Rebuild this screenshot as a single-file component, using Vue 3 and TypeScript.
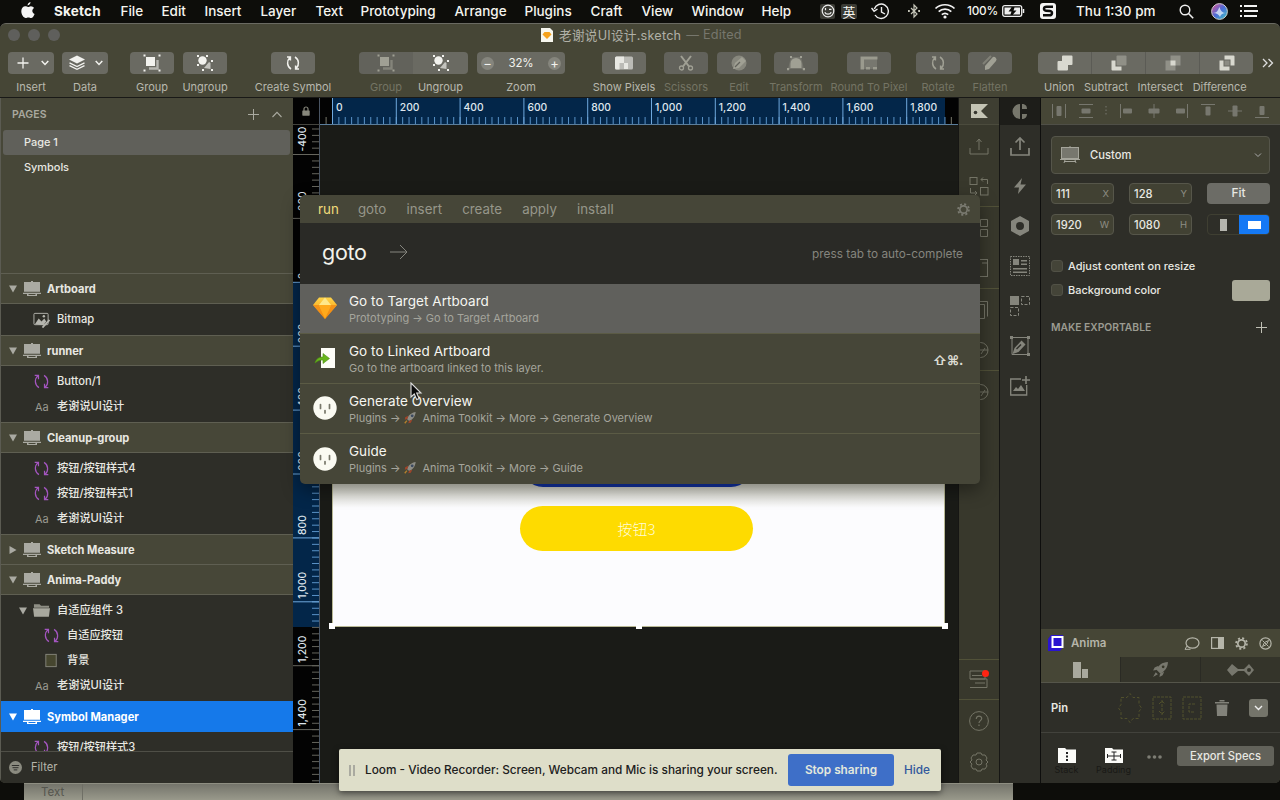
<script setup lang="ts">
interface MenuItem { text: string; width: number }
interface Tool { label: string; icon: string; width: number; gap: number; dim?: boolean; arrow?: boolean; side?: 'l' | 'r' }
interface Layer { name: string; icon: string; indent?: number; caret?: boolean }
interface Group { name: string; open: boolean; selected?: boolean; layers: Layer[] }

const menus: MenuItem[] = [
  { text: 'File', width: 41 }, { text: 'Edit', width: 43 }, { text: 'Insert', width: 56 },
  { text: 'Layer', width: 55 }, { text: 'Text', width: 45 }, { text: 'Prototyping', width: 94 },
  { text: 'Arrange', width: 70 }, { text: 'Plugins', width: 66 }, { text: 'Craft', width: 51 },
  { text: 'View', width: 50 }, { text: 'Window', width: 70 }, { text: 'Help', width: 59 },
]

const tools: Tool[] = [
  { label: 'Insert', icon: 'plus', width: 46, gap: 0, arrow: true },
  { label: 'Data', icon: 'stack', width: 46, gap: 8, arrow: true },
  { label: 'Group', icon: 'group', width: 44, gap: 22 },
  { label: 'Ungroup', icon: 'ungroup', width: 44, gap: 9 },
  { label: 'Create Symbol', icon: 'sync', width: 44, gap: 44 },
  { label: 'Group', icon: 'group', width: 54, gap: 44, dim: true, side: 'l' },
  { label: 'Ungroup', icon: 'ungroup', width: 55, gap: 0, side: 'r' },
  { label: 'Zoom', icon: '', width: 88, gap: 9 },
  { label: 'Show Pixels', icon: 'pixels', width: 44, gap: 37 },
  { label: 'Scissors', icon: 'scissors', width: 44, gap: 18, dim: true },
  { label: 'Edit', icon: 'edit', width: 44, gap: 9, dim: true },
  { label: 'Transform', icon: 'transform', width: 44, gap: 13, dim: true },
  { label: 'Round To Pixel', icon: 'round', width: 44, gap: 29, dim: true },
  { label: 'Rotate', icon: 'sync', width: 44, gap: 25, dim: true },
  { label: 'Flatten', icon: 'flatten', width: 44, gap: 8, dim: true },
]
const booleans = ['Union', 'Subtract', 'Intersect', 'Difference']

const groups: Group[] = [
  { name: 'Artboard', open: true, layers: [{ name: 'Bitmap', icon: 'bitmap' }] },
  { name: 'runner', open: true, layers: [{ name: 'Button/1', icon: 'symbol' }, { name: '老谢说UI设计', icon: 'text' }] },
  { name: 'Cleanup-group', open: true, layers: [
    { name: '按钮/按钮样式4', icon: 'symbol' }, { name: '按钮/按钮样式1', icon: 'symbol' }, { name: '老谢说UI设计', icon: 'text' }] },
  { name: 'Sketch Measure', open: false, layers: [] },
  { name: 'Anima-Paddy', open: true, layers: [
    { name: '自适应组件 3', icon: 'folder', caret: true }, { name: '自适应按钮', icon: 'symbol', indent: 1 },
    { name: '背景', icon: 'rect', indent: 1 }, { name: '老谢说UI设计', icon: 'text' }] },
  { name: 'Symbol Manager', open: true, selected: true, layers: [{ name: '按钮/按钮样式3', icon: 'symbol' }] },
]

const scale = 63.8
const fmt = (n: number) => n.toLocaleString('en-US')
const hMajor = Array.from({ length: 10 }, (_, i) => ({ x: 12.5 + i * scale, label: fmt(i * 200) }))
const hMinor = Array.from({ length: 99 }, (_, i) => 6.1 + i * 6.38).filter(x => x < 638)
const vMajor = Array.from({ length: 10 }, (_, i) => ({ y: 29.5 + i * 63.9, label: fmt(i * 200 - 400) }))
const vMinor = Array.from({ length: 103 }, (_, i) => 4 + i * 6.39).filter(y => y < 657)

const commands = ['goto', 'insert', 'create', 'apply', 'install']
const results = [
  { title: 'Go to Target Artboard', path: ['Prototyping', 'Go to Target Artboard'], icon: 'gem' },
  { title: 'Go to Linked Artboard', path: ['Go to the artboard linked to this layer.'], icon: 'link', keys: '⇧⌘.' },
  { title: 'Generate Overview', path: ['Plugins', '@Anima Toolkit', 'More', 'Generate Overview'], icon: 'face' },
  { title: 'Guide', path: ['Plugins', '@Anima Toolkit', 'More', 'Guide'], icon: 'face' },
]
const craft = ['upload-thin', 'swap', 'swap', 'page', 'pages', 'circle', 'circle']
const runner = ['upload', 'bolt', 'hex', 'list', 'tiles', 'pencil', 'image']
const aligns = ['dist-h', 'dist-v', 'dots', 'al', 'ac', 'ar', 'at', 'am', 'ab']
</script>

<template>
  <div class="screen">
    <svg class="sprite" width="0" height="0">
      <defs>
        <linearGradient id="gemfill" x1="0" y1="0" x2="0" y2="1"><stop offset="0" stop-color="#ffd54a" /><stop offset="1" stop-color="#f58a00" /></linearGradient>
        <linearGradient id="siri" x1="0" y1="0" x2="1" y2="1"><stop offset="0" stop-color="#e8508c" /><stop offset=".5" stop-color="#4a6bd8" /><stop offset="1" stop-color="#3fc9c0" /></linearGradient>
      </defs>
      <symbol id="plus" viewBox="0 0 18 18"><path d="M9 3.500v11M3.500 9h11" stroke="currentColor" stroke-width="1.300" fill="none" /></symbol>
      <symbol id="stack" viewBox="0 0 18 18"><path d="M9 1.500l8 4-8 4-8-4z" fill="currentColor" /><path d="M1.500 8.800L9 12.500l7.500-3.700M1.500 11.600L9 15.300l7.500-3.700" stroke="currentColor" stroke-width="1.300" fill="none" /></symbol>
      <symbol id="group" viewBox="0 0 18 18"><path d="M6 14.500h8.500V6" stroke="currentColor" stroke-width="2.400" opacity=".55" fill="none" /><rect x="3" y="3" width="9" height="9" fill="currentColor" /><path d="M.5.5h2v2h-2zM15.500.5h2v2h-2zM.5 15.500h2v2h-2zM15.500 15.500h2v2h-2z" fill="currentColor" /></symbol>
      <symbol id="ungroup" viewBox="0 0 18 18"><circle cx="6.500" cy="6.500" r="4.200" fill="currentColor" /><path d="M1 1h2v2H1zM10 1h2v2h-2zM1 10h2v2H1zM15 6h2v2h-2zM6 15h2v2H6zM15 15h2v2h-2z" fill="currentColor" /><path d="M8 14l5-6 1.500 1v6z" fill="currentColor" opacity=".65" /></symbol>
      <symbol id="sync" viewBox="0 0 18 18"><path d="M7 15C3 12.500 2.400 7 5.800 3.400M3 3h3.400v3.400M11 3c4 2.500 4.600 8 1.200 11.600M15 15h-3.400v-3.400" stroke="currentColor" stroke-width="1.500" fill="none" /></symbol>
      <symbol id="pixels" viewBox="0 0 18 18"><rect x="0" y="2.500" width="18" height="13" rx="1.500" fill="currentColor" opacity=".6" /><path d="M0 4a1.500 1.500 0 0 1 1.500-1.500H9V9H4.500v6.500h-3A1.500 1.500 0 0 1 0 14zM9 9h4v6H9z" fill="currentColor" opacity=".8" /></symbol>
      <symbol id="scissors" viewBox="0 0 18 18"><path d="M4 2l8 10.500M14 2L6 12.500" stroke="currentColor" stroke-width="2" /><circle cx="4.500" cy="14" r="2" fill="none" stroke="currentColor" stroke-width="1.300" /><circle cx="13.500" cy="14" r="2" fill="none" stroke="currentColor" stroke-width="1.300" /></symbol>
      <symbol id="edit" viewBox="0 0 18 18"><circle cx="9" cy="9" r="7.500" fill="currentColor" opacity=".6" /><path d="M3 15l2-6 7-6 4 4-7 7z" fill="currentColor" /><path d="M5 13l5-5" stroke="#62625b" stroke-width="1.200" /></symbol>
      <symbol id="transform" viewBox="0 0 18 18"><path d="M4 3h10l3 12H1z" fill="currentColor" opacity=".3" /><path d="M3.500 14V9.500a5.500 5.500 0 0 1 11 0V14z" fill="currentColor" /><path d="M0 14h2.200v2.200H0zM15.800 14H18v2.200h-2.200zM3 2h2v2H3zM13 2h2v2h-2z" fill="currentColor" /></symbol>
      <symbol id="round" viewBox="0 0 18 18"><rect x="1" y="3" width="16" height="12" fill="currentColor" opacity=".35" /><path d="M.5 2.500h17v3H4v10H.5zM13 13h4v2.500h-4zM6 13h4v2.500H6z" fill="currentColor" opacity=".85" /></symbol>
      <symbol id="flatten" viewBox="0 0 18 18"><path d="M4 12l7-8a2.500 2.500 0 0 1 4 3l-7 8-4 1z" fill="currentColor" /><path d="M2 10l8-8" stroke="currentColor" stroke-width="2" opacity=".5" /></symbol>
      <symbol id="Union" viewBox="0 0 16 16"><path d="M6 .5h8.500a1 1 0 0 1 1 1V9a1 1 0 0 1-1 1H11v4.500a1 1 0 0 1-1 1H1.500a1 1 0 0 1-1-1V7a1 1 0 0 1 1-1H5V1.500a1 1 0 0 1 1-1z" fill="currentColor" /></symbol>
      <symbol id="Subtract" viewBox="0 0 16 16"><rect x="5.500" y=".5" width="10" height="10" rx="1" fill="currentColor" opacity=".35" /><path d="M.5 5.500h4v6h6v4H1.500a1 1 0 0 1-1-1z" fill="currentColor" /></symbol>
      <symbol id="Intersect" viewBox="0 0 16 16"><path d="M5.500.5h10v10h-5v5H.5v-10h5z" fill="currentColor" opacity=".35" /><rect x="5.500" y="5.500" width="5" height="5" fill="currentColor" /></symbol>
      <symbol id="Difference" viewBox="0 0 16 16"><path d="M5.500.5h9a1 1 0 0 1 1 1v9h-4v-6h-6zM.5 5.500h4v6h6v4H1.500a1 1 0 0 1-1-1z" fill="currentColor" /><rect x="5.500" y="5.500" width="5" height="5" fill="currentColor" opacity=".3" /></symbol>
      <symbol id="board" viewBox="0 0 18 16"><path d="M1 1h16v9.800H1zM8 0h2v2H8zM0 11.800h18V13H0zM4 13h1.500v2H4zM12.500 13H14v2h-1.500zM4 14h10v1H4z" fill="currentColor" /></symbol>
      <symbol id="bitmap" viewBox="0 0 18 18"><rect x="1" y="2.500" width="15" height="12" rx="1" fill="none" stroke="#b5b5ae" /><path d="M2 14l4-6 3 3 3-3 2 3-3 4z" fill="#b5b5ae" /><circle cx="11.500" cy="5.500" r="1.300" fill="#b5b5ae" /><path d="M10 17.500l7.500-8" stroke="#b5b5ae" stroke-width="2" /></symbol>
      <symbol id="symbol" viewBox="0 0 18 18"><path d="M6.300 15.500C1.600 12.700 1.400 6.300 5 3M1.800 2.500h4v4.200M11.700 2.500c4.700 2.800 4.900 9.200 1.300 12.500M16.200 15.500h-4v-4.200" stroke="#a355bf" stroke-width="1.300" fill="none" /></symbol>
      <symbol id="folder" viewBox="0 0 18 16"><path d="M1 1.500h6L8.500 3H17v2H1z" fill="#8e8e84" /><path d="M0 5.500h18l-1.200 9H1.200z" fill="#a8a89e" /></symbol>
      <symbol id="rect" viewBox="0 0 18 18"><rect x="3" y="2.500" width="11" height="13" fill="#46462f" stroke="#85857b" /></symbol>
      <symbol id="face" viewBox="0 0 24 24"><circle cx="12" cy="12" r="11.700" fill="#fafaf2" /><path d="M7.500 8.500v4M16.500 8.500v4M12 14.500v2.500" stroke="#77776a" stroke-width="1.700" stroke-linecap="round" /></symbol>
      <symbol id="gem" viewBox="0 0 24 24"><path d="M6 1.500h12l6 7.500-12 14L0 9z" fill="url(#gemfill)" /><path d="M6 9h12L12 1.500z" fill="#ffe88a" /><path d="M0 9h6l6 14zM24 9h-6l-6 14z" fill="#f28a13" opacity=".8" /><path d="M6 9h12l-6 14z" fill="#ffaa1c" /></symbol>
      <symbol id="link" viewBox="0 0 24 24"><rect x="8" y="2" width="14" height="20" fill="#fdfdf8" /><path d="M2 17c1-4 4-6 8-6V7.500l6.500 5-6.500 5V14c-3 0-5 .5-8 3z" fill="#68b51d" stroke="#4b8e12" stroke-width=".6" /></symbol>
      <symbol id="rocket" viewBox="0 0 16 16"><path d="M14.500 1C10 1.500 6 5 4.500 9l2.500 2.500C11 10 14 6 14.500 1z" fill="#8d8d86" /><path d="M6 5.500L2.500 7 2 10l3-1zM10.500 10L9 13.500l-3 .5 1-3z" fill="#a0442a" /><circle cx="10.500" cy="5.500" r="1.600" fill="#3b4a60" /><path d="M4.500 11L2 14" stroke="#b5802b" stroke-width="1.500" /></symbol>
      <symbol id="upload-thin" viewBox="0 0 20 20"><path d="M1 12v6h18v-6M10 14V3M7.500 6L10 3l2.500 3" stroke="currentColor" fill="none" /></symbol>
      <symbol id="swap" viewBox="0 0 20 20"><rect x="1" y="1.500" width="7" height="7" stroke="currentColor" fill="none" /><rect x="11.500" y="11.500" width="7.500" height="7.500" stroke="currentColor" fill="none" /><path d="M18.500 8V3.500H12M14 1.500l-2 2 2 2M1.500 12v5H8M6 15l2 2-2 2" stroke="currentColor" fill="none" /></symbol>
      <symbol id="docks" viewBox="0 0 20 20"><path d="M1.500 1.500h7v7h-7zM11.500 1.500h7v7h-7zM1.500 11.500h7v7h-7zM11.500 11.500h7v7h-7z" stroke="currentColor" fill="none" /></symbol>
      <symbol id="page" viewBox="0 0 20 20"><rect x="1.500" y="1.500" width="17" height="17" stroke="currentColor" fill="none" /><path d="M13 5h5" stroke="currentColor" /></symbol>
      <symbol id="pages" viewBox="0 0 20 20"><path d="M5 1.500h13.500v15M2 4.500h13.500v14H2z" stroke="currentColor" fill="none" /></symbol>
      <symbol id="circle" viewBox="0 0 20 20"><circle cx="11.500" cy="10" r="7.500" stroke="currentColor" fill="none" /><path d="M10 10h9M12 14l4-6" stroke="currentColor" /></symbol>
      <symbol id="upload" viewBox="0 0 20 20"><path d="M1 12v7h18v-7M10 14V2M5.500 6.500L10 2l4.500 4.500" stroke="currentColor" stroke-width="1.700" fill="none" /></symbol>
      <symbol id="bolt" viewBox="0 0 20 20"><path d="M12 2L4 11.500h5L8 18l8-9.500h-5.500z" fill="currentColor" /></symbol>
      <symbol id="hex" viewBox="0 0 20 20"><path fill-rule="evenodd" d="M10 0l9 5v10l-9 5-9-5V5zM10 6a4 4 0 1 0 0 8 4 4 0 0 0 0-8z" fill="currentColor" /></symbol>
      <symbol id="list" viewBox="0 0 20 20"><rect x=".5" y=".5" width="19" height="19" fill="none" stroke="currentColor" stroke-dasharray="1.500 1" /><path d="M3 3h6v6H3zM11 4h6v1.500h-6zM11 7.500h6V9h-6zM3 12h14v1.600H3zM3 15.400h14V17H3z" fill="currentColor" /></symbol>
      <symbol id="tiles" viewBox="0 0 20 20"><rect width="9" height="9" fill="currentColor" /><path d="M11.500.5h8v8h-8zM.5 11.500h8v8h-8z" fill="none" stroke="currentColor" stroke-dasharray="3 1.500" /></symbol>
      <symbol id="pencil" viewBox="0 0 20 20"><path d="M2 1.500h16v17H2z" fill="none" stroke="currentColor" /><path d="M0 0h3v3H0zM17 0h3v3h-3zM17 17h3v3h-3z" fill="currentColor" /><path d="M2.500 18l2-6 7-7.500 4 4-7 7.500z" fill="currentColor" /><path d="M6.500 13l4.500-4.500" stroke="#2e2e28" stroke-width="1.500" /></symbol>
      <symbol id="image" viewBox="0 0 20 20"><path d="M11 3H.7v16h16V9" fill="none" stroke="currentColor" stroke-width="1.300" /><path d="M3 15l3-4 2 2 3-4 4 6zM15.200 0h1.600v3.200H20v1.600h-3.200V8h-1.600V4.800H12V3.200h3.200z" fill="currentColor" /></symbol>
      <symbol id="dist-h" viewBox="0 0 14 14"><path d="M.5 0v14M13.500 0v14" stroke="currentColor" /><rect x="4.500" y="2" width="5" height="10" rx="1" fill="currentColor" /></symbol>
      <symbol id="dist-v" viewBox="0 0 14 14"><path d="M0 .5h14M0 13.500h14" stroke="currentColor" /><rect x="2.500" y="4.500" width="9" height="5" rx="1" fill="currentColor" /></symbol>
      <symbol id="dots" viewBox="0 0 14 14"><path d="M7 2v10" stroke="currentColor" stroke-dasharray="1.500 2" /></symbol>
      <symbol id="al" viewBox="0 0 14 14"><path d="M.5 0v14" stroke="currentColor" /><rect x="3" y="4.500" width="9" height="5" rx="1" fill="currentColor" /></symbol>
      <symbol id="ac" viewBox="0 0 14 14"><path d="M7 0v14" stroke="currentColor" /><rect x="1.500" y="4.500" width="11" height="5" rx="1" fill="currentColor" /></symbol>
      <symbol id="ar" viewBox="0 0 14 14"><path d="M13.500 0v14" stroke="currentColor" /><rect x="2" y="4.500" width="9" height="5" rx="1" fill="currentColor" /></symbol>
      <symbol id="at" viewBox="0 0 14 14"><path d="M0 .5h14" stroke="currentColor" /><rect x="4.500" y="2.500" width="5" height="9" rx="1" fill="currentColor" /></symbol>
      <symbol id="am" viewBox="0 0 14 14"><path d="M0 7h14" stroke="currentColor" /><rect x="4.500" y="1.500" width="5" height="11" rx="1" fill="currentColor" /></symbol>
      <symbol id="ab" viewBox="0 0 14 14"><path d="M0 13.500h14" stroke="currentColor" /><rect x="4.500" y="2" width="5" height="9" rx="1" fill="currentColor" /></symbol>
      <symbol id="cog" viewBox="0 0 20 20"><circle cx="10" cy="10" r="5.700" fill="none" stroke="currentColor" stroke-width="2.600" /><circle cx="10" cy="10" r="8.300" fill="none" stroke="currentColor" stroke-width="2.800" stroke-dasharray="3.200 3.320" /></symbol>
    </svg>

    <header class="menubar">
      <svg class="apple" width="14" height="17" viewBox="0 0 14 17"><path d="M9.500 0c.1 1.700-1.200 3.300-2.900 3.400C6.500 1.800 7.900.2 9.500 0zM9.800 4.200c1.400 0 2.600.8 3.200 1.700-2.500 1.500-2 5 .6 6-.6 1.700-2 4.100-3.500 4.100-1 0-1.500-.6-2.700-.6-1.200 0-1.700.6-2.700.6C2.600 16 .2 12.300.3 9 .4 6 2.300 4.300 4.200 4.300c1.200 0 2.200.7 2.900.7.700 0 1.600-.8 2.700-.8z" fill="#f5f5f5" /></svg>
      <strong class="app">Sketch</strong>
      <span v-for="m in menus" :key="m.text" class="menu" :style="{ width: m.width + 'px' }">{{ m.text }}</span>
      <div class="status">
        <span class="tile"><svg width="14" height="14" viewBox="0 0 14 14"><circle cx="7" cy="7" r="5.800" fill="none" stroke="#eee" stroke-width="1.200" /><path d="M4.500 4v2.200M8 5.300h2.500M3.800 8.200c1 2.700 5.400 2.700 6.400 0" stroke="#eee" stroke-width="1.200" fill="none" /></svg></span>
        <span class="tile han">英</span>
        <svg class="clock" width="19" height="17" viewBox="0 0 19 17"><path d="M3.300 6A7.200 7.200 0 1 1 4 12M.5 5l2.600 3.300L6.500 6M10.500 4v5l3.500 2" stroke="#eee" stroke-width="1.400" fill="none" /></svg>
        <svg class="bt" width="12" height="16" viewBox="0 0 12 16"><path d="M3 5l6 6-3 3V2l3 3-6 6" stroke="#c5c5b8" stroke-width="1.200" fill="none" /><path d="M0 8h1.800M5.200 8h1.600M10.200 8H12" stroke="#c5c5b8" stroke-width="1.800" /></svg>
        <svg class="wifi" width="22" height="16" viewBox="0 0 22 16"><path d="M1.500 5.500c5-5 14-5 19 0M4.700 8.700c3.500-3.400 9.100-3.400 12.600 0M7.800 11.700c2-1.700 4.400-1.700 6.400 0" stroke="#f2f2f2" stroke-width="1.700" fill="none" /><circle cx="11" cy="14" r="1.600" fill="#f2f2f2" /></svg>
        <span class="pct">100%</span>
        <svg class="batt" width="23" height="12" viewBox="0 0 23 12"><rect x=".7" y=".7" width="19" height="10.600" rx="2" fill="none" stroke="#eee" stroke-width="1.300" /><path d="M2.500 2.500h7l-3 4h3l-1 3h-6zM12.500 2.500H18v7h-7l3.500-4h-3z" fill="#eee" /><path d="M21.500 4v4" stroke="#eee" stroke-width="1.500" /></svg>
        <svg class="sogou" width="16" height="16" viewBox="0 0 16 16"><rect width="16" height="16" rx="3" fill="#f4f4f4" /><path d="M13 3.800H6.500C3.200 3.800 3.200 7.500 6 7.700l4 .3c3 .3 2.500 4.300-.5 4.300H3" stroke="#0c0c0c" stroke-width="2.400" fill="none" /></svg>
        <span class="time">Thu 1:30 pm</span>
        <svg class="search" width="15" height="15" viewBox="0 0 15 15"><circle cx="6" cy="6" r="4.800" fill="none" stroke="#eee" stroke-width="1.400" /><path d="M9.500 9.500l4.700 4.700" stroke="#eee" stroke-width="1.600" /></svg>
        <svg class="siri" width="17" height="17" viewBox="0 0 17 17"><circle cx="8.500" cy="8.500" r="7.900" fill="url(#siri)" stroke="#ccc" /><path d="M2 10c4 0 5-3 6.500-6 1 4 3 6 6.500 6-3 0-5 1-6 4-1-2-3-4-7-4z" fill="#f3fcff" opacity=".7" /></svg>
        <svg class="notif" width="18" height="12" viewBox="0 0 18 12"><path d="M0 1h2M0 6h2M0 11h2M4 1h13M4 6h14M4 11h13" stroke="#f2f2f2" stroke-width="1.900" /></svg>
      </div>
    </header>

    <main class="window">
      <div class="titlebar">
        <i class="light" /><i class="light" /><i class="light" />
        <div class="title">
          <svg width="12" height="14" viewBox="0 0 12 14"><path d="M0 0h9l3 3v11H0z" fill="#f7f7ef" /><path d="M3.500 4h5l2 2.500L6 11 1.500 6.500z" fill="#f5a21c" /></svg>
          <span>老谢说UI设计.sketch</span><em>— Edited</em>
        </div>
      </div>

      <div class="toolbar">
        <div v-for="(t, i) in tools" :key="i" class="tool" :class="[t.side, { dim: t.dim }]" :style="{ width: t.width + 'px', marginLeft: t.gap + 'px' }">
          <div class="btn">
            <template v-if="t.icon">
              <svg width="18" height="18"><use :href="'#' + t.icon" /></svg>
              <svg v-if="t.arrow" class="arr" width="8" height="6" viewBox="0 0 8 6"><path d="M.7 1L4 4.500 7.300 1" stroke="currentColor" stroke-width="1.500" fill="none" /></svg>
            </template>
            <template v-else>
              <i class="zb">−</i><span class="zv">32%</span><i class="zb on">+</i>
            </template>
          </div>
          <span class="lbl">{{ t.label }}</span>
        </div>
        <div class="bools">
          <div class="boolrow"><div v-for="b in booleans" :key="b" class="seg"><svg width="16" height="16"><use :href="'#' + b" /></svg></div></div>
          <div class="boollabels"><span v-for="b in booleans" :key="b">{{ b }}</span></div>
        </div>
        <svg class="more" width="12" height="10" viewBox="0 0 12 10"><path d="M1 1l4 4-4 4M6.500 1l4 4-4 4" stroke="#ddd" stroke-width="1.300" fill="none" /></svg>
      </div>

      <div class="body">
        <aside class="side">
          <div class="pages">
            <div class="phead"><span>PAGES</span>
              <svg width="13" height="13" viewBox="0 0 13 13"><path d="M6.500 1v11M1 6.500h11" stroke="#aaaaa0" /></svg>
              <svg width="10" height="7" viewBox="0 0 10 7"><path d="M.5 6L5 1.300 9.500 6" stroke="#aaaaa0" fill="none" stroke-width="1.100" /></svg>
            </div>
            <div class="prow active">Page 1</div>
            <div class="prow">Symbols</div>
          </div>
          <div class="layers">
            <section v-for="g in groups" :key="g.name">
              <div class="ghead" :class="{ closed: !g.open, selected: g.selected }">
                <svg class="tri" width="8" height="8" viewBox="0 0 8 8"><path :d="g.open ? 'M0 .5h8L4 7.500z' : 'M.5 0v8L7.500 4z'" fill="currentColor" /></svg>
                <svg class="gicon" width="18" height="16"><use href="#board" /></svg>
                <span>{{ g.name }}</span>
              </div>
              <div v-if="g.open" class="kids">
                <div v-for="(l, i) in g.layers" :key="i" class="lrow" :class="{ deep: l.indent }">
                  <svg v-if="l.caret" class="tri sub" width="8" height="8" viewBox="0 0 8 8"><path d="M0 .5h8L4 7.500z" fill="currentColor" /></svg>
                  <span v-if="l.icon === 'text'" class="aa">Aa</span>
                  <svg v-else class="licon" width="17" height="17"><use :href="'#' + l.icon" /></svg>
                  <span class="lname">{{ l.name }}</span>
                </div>
              </div>
            </section>
          </div>
          <div class="filter">
            <svg width="13" height="13" viewBox="0 0 13 13"><circle cx="6.500" cy="6.500" r="6.500" fill="#8b8b80" /><path d="M2.800 4.500h7.400M3.500 6.700h6M4.700 8.900h3.600" stroke="#30302d" /></svg>
            <span>Filter</span>
          </div>
        </aside>

        <div class="work">
          <div class="hrow">
            <div class="lock"><svg width="8" height="10" viewBox="0 0 8 10"><path d="M2 5V3a2 2 0 0 1 4 0v2" fill="none" stroke="#88887c" stroke-width="1.200" /><rect x=".3" y="4.500" width="7.400" height="5.200" rx=".6" fill="#88887c" /></svg></div>
            <svg class="hruler" width="638" height="27">
              <rect x="12" width="613" height="26" fill="#032649" />
              <line v-for="x in hMinor" :key="x" :x1="x" :x2="x" y1="19" y2="26" :stroke="x < 12 || x > 625 ? '#77776a' : '#5a93c8'" />
              <g v-for="m in hMajor" :key="m.label"><line :x1="m.x" :x2="m.x" y1="0" y2="26" stroke="#6fa8dd" /><text :x="m.x + 3.500" y="13">{{ m.label }}</text></g>
              <path d="M0 26.500h638" stroke="#5b7e9c" />
            </svg>
          </div>
          <div class="crow">
            <svg class="vruler" width="27" height="658">
              <rect y="157" width="27" height="345" fill="#032649" />
              <line v-for="y in vMinor" :key="y" :y1="y" :y2="y" x1="19" x2="26" :stroke="y < 157 || y > 502 ? '#66665e' : '#5a93c8'" />
              <g v-for="m in vMajor" :key="m.label"><line :y1="m.y" :y2="m.y" x1="0" x2="26" :stroke="m.y < 156 || m.y > 502 ? '#66665e' : '#6fa8dd'" /><text :transform="`translate(13 ${m.y - 3}) rotate(-90)`">{{ m.label }}</text></g>
              <path d="M26.500 0v658" stroke="#4a5563" />
            </svg>
            <div class="canvas">
              <div class="artboard">
                <div class="bluebtn" />
                <div class="yellowbtn">按钮3</div>
                <i class="h a" /><i class="h b" /><i class="h c" />
              </div>
            </div>
          </div>
        </div>

        <div class="strip craft">
          <div class="shead"><svg width="17" height="16" viewBox="0 0 17 16"><path d="M0 1h17l-7 7 7 7H0z" fill="#c4c4b4" /><circle cx="4.500" cy="9.500" r="1.800" fill="#37372f" /></svg></div>
          <div v-for="(c, i) in craft" :key="i" class="cell" :class="{ line: i === 1 || i === 3 || i === 5 }"><svg width="20" height="20"><use :href="i === 2 ? '#docks' : '#' + c" /></svg></div>
          <div class="spacer" />
          <div class="cell top line"><svg width="20" height="20" viewBox="0 0 20 20"><path d="M1 1h15v8H1zM1 9h17v8.500H1M3 5.500h10M6 13h10" stroke="currentColor" fill="none" /><circle cx="16.500" cy="3.500" r="3.500" fill="#ff2413" /></svg></div>
          <div class="cell"><svg width="20" height="20" viewBox="0 0 20 20"><circle cx="10" cy="10" r="9.400" stroke="currentColor" fill="none" /><path d="M7.300 8c0-4 5.500-3.500 5.400-.5 0 2-2.700 2.300-2.700 4.500M10 13.500v1.500" stroke="currentColor" fill="none" stroke-width="1.200" /></svg></div>
          <div class="cell"><svg width="20" height="20" viewBox="0 0 20 20"><path d="M8 1h4l1 2 3 0 2 3-1 2 2 2-2 2 1 2-2 3-3 0-1 2H8l-1-2-3 0-2-3 1-2-2-2 2-2-1-2 2-3 3 0z" stroke="currentColor" fill="none" stroke-linejoin="round" /><circle cx="10" cy="10" r="3" stroke="currentColor" fill="none" /></svg></div>
        </div>

        <div class="strip runner">
          <div class="shead"><svg width="17" height="17" viewBox="0 0 17 17"><path d="M8 1v15A7.500 7.500 0 0 1 8 1zM10 1c4 0 5 2.500 5 5h-5zM10 11h5c0 3-2 5-5 5z" fill="#77776c" /></svg></div>
          <div v-for="r in runner" :key="r" class="cell"><svg width="20" height="20"><use :href="'#' + r" /></svg></div>
        </div>

        <aside class="inspector">
          <div class="aligns"><svg v-for="a in aligns" :key="a" :class="{ narrow: a === 'dots' }" width="14" height="14"><use :href="'#' + a" /></svg></div>
          <div class="props">
            <div class="select">
              <svg width="20" height="18" viewBox="0 0 20 18"><rect x="1.500" y="1.500" width="17" height="11" fill="#77776e" stroke="#a5a59b" /><path d="M0 13.500h20M5 14l-1 3M15 14l1 3M4 15.500h12M10 0v1" stroke="#a5a59b" /></svg>
              <span>Custom</span>
              <svg width="8" height="6" viewBox="0 0 8 6"><path d="M1 1.500l3 3 3-3" stroke="#aaa" fill="none" /></svg>
            </div>
            <div class="frow"><div class="inp"><b>111</b><i>X</i></div><div class="inp"><b>128</b><i>Y</i></div><div class="fit">Fit</div></div>
            <div class="frow two"><div class="inp"><b>1920</b><i>W</i></div><div class="inp"><b>1080</b><i>H</i></div><div class="orient"><div><i class="port" /></div><div class="on"><i class="land" /></div></div></div>
            <div class="check"><i /><span>Adjust content on resize</span></div>
            <div class="check second"><i /><span>Background color</span><b class="swatch" /></div>
            <div class="export"><span>MAKE EXPORTABLE</span><svg width="11" height="11" viewBox="0 0 11 11"><path d="M5.500 0v11M0 5.500h11" stroke="#c0c0b5" /></svg></div>
          </div>
          <div class="anima">
            <div class="ahead">
              <svg class="alogo" width="16" height="16" viewBox="0 0 16 16"><path d="M0 4l3-4h12v12l-3 4H0z" fill="#2a14d0" /><rect x="4.500" y="2" width="10" height="10" fill="#2a14d0" stroke="#fff" stroke-width="2" /></svg>
              <strong>Anima</strong>
              <svg width="16" height="13" viewBox="0 0 16 13"><ellipse cx="8.500" cy="6" rx="6.500" ry="5.200" fill="none" stroke="currentColor" stroke-width="1.200" /><path d="M3 9l-2 3.300h5.500" stroke="currentColor" fill="none" /></svg>
              <svg width="13" height="12" viewBox="0 0 13 12"><rect x=".6" y=".6" width="11.800" height="10.800" fill="none" stroke="currentColor" stroke-width="1.200" /><path d="M7 0h6v12H7z" fill="currentColor" /></svg>
              <svg width="13" height="13"><use href="#cog" /></svg>
              <svg width="13" height="13" viewBox="0 0 13 13"><circle cx="6.500" cy="6.500" r="5.600" fill="none" stroke="currentColor" stroke-width="1.200" /><path d="M3.500 3.500l6 6M9.500 3.500l-4 2-2 4 4-2z" stroke="currentColor" fill="none" /></svg>
            </div>
            <div class="atabs">
              <div class="on"><svg width="17" height="16" viewBox="0 0 17 16"><path d="M1 0h8v16H1zM10 7h6v9h-6z" fill="#a9a99e" /></svg></div>
              <div><svg width="17" height="17" viewBox="0 0 16 16"><path d="M15 1C9.500 1 6 4.500 4 8l4 4c3.500-2 7-5.500 7-11zM6 4.500L2.500 6 1 9l3-.5zM11.500 10L10 13.500 7 15l.5-3zM3.500 10.500L1 15l4.500-2.500z" fill="#77776d" /><circle cx="10.500" cy="5.500" r="1.300" fill="#363628" /></svg></div>
              <div><svg width="27" height="12" viewBox="0 0 27 12"><path fill-rule="evenodd" d="M5 0l6 5h6l5-5 5 6-5 6-5-5h-6l-6 5-5-6zM22 4a2 2 0 1 0 0 4 2 2 0 0 0 0-4z" fill="#77776d" /></svg></div>
            </div>
            <div class="pin">
              <strong>Pin</strong>
              <svg width="24" height="30" viewBox="0 0 24 30"><path d="M3 4.500h6l3-4 3 4h6v7l2.500 3.500-2.500 3.500v7h-6l-3 4-3-4H3v-7L.5 15 3 11.500z" fill="none" stroke="#51502c" stroke-dasharray="3 2" /></svg>
              <svg width="20" height="24" viewBox="0 0 20 24"><path d="M1 1h18v22H1zM10 4v15M7 8l3-3 3 3M7 15l3 3 3-3" fill="none" stroke="#51502c" stroke-dasharray="3 1" /></svg>
              <svg width="20" height="24" viewBox="0 0 20 24"><path d="M1 1h18v22H1zM13 8H7v8h6" fill="none" stroke="#51502c" stroke-dasharray="3 1" /></svg>
              <svg class="bin" width="14" height="16" viewBox="0 0 14 16"><path d="M0 2h14v1.500H0zM4.500 0h5v1.500h-5zM1.500 4.500h11L12 16H2z" fill="#82827a" /></svg>
              <div class="drop"><svg width="9" height="6" viewBox="0 0 9 6"><path d="M1 1l3.500 3.500L8 1" stroke="#eee" stroke-width="1.400" fill="none" /></svg></div>
            </div>
            <div class="afoot">
              <div class="fold"><svg width="18" height="15" viewBox="0 0 18 15"><path d="M0 0h7l1.500 1.500H18V15H0z" fill="#fbfbf8" /><path d="M9 4v9" stroke="#222" stroke-width="2" stroke-dasharray="2 1.500" /></svg><span>Stack</span></div>
              <div class="fold"><svg width="18" height="15" viewBox="0 0 18 15"><path d="M0 0h7l1.500 1.500H18V15H0z" fill="#fbfbf8" /><path d="M2.500 8h13M9 4v8M2.500 6v4M15.500 6v4M6.500 4h5M6.500 12h5" stroke="#222" /></svg><span>Padding</span></div>
              <svg class="dots" width="15" height="4" viewBox="0 0 15 4"><circle cx="2" cy="2" r="1.800" fill="#7d7d74" /><circle cx="7.500" cy="2" r="1.800" fill="#7d7d74" /><circle cx="13" cy="2" r="1.800" fill="#7d7d74" /></svg>
              <div class="specs">Export Specs</div>
            </div>
          </div>
        </aside>
      </div>
    </main>

    <footer class="behind"><span>Text</span></footer>

    <div class="runbar">
      <div class="rtabs"><span class="cur">run</span><span v-for="c in commands" :key="c">{{ c }}</span><svg width="13" height="13"><use href="#cog" /></svg></div>
      <div class="rinput"><span class="q">goto</span>
        <svg width="18" height="16" viewBox="0 0 18 16"><path d="M0 8h17M10 1l7 7-7 7" stroke="#85857e" fill="none" /></svg>
        <span class="hint">press tab to auto-complete</span></div>
      <div v-for="(r, i) in results" :key="i" class="rrow" :class="{ sel: i === 0 }">
        <svg class="ricon" width="24" height="24"><use :href="'#' + r.icon" /></svg>
        <div class="rtext"><div class="rt">{{ r.title }}</div>
          <div class="rs"><template v-for="(p, j) in r.path" :key="j"><span v-if="j" class="ar">→</span><svg v-if="p[0] === '@'" width="14" height="14"><use href="#rocket" /></svg><span>{{ p.replace('@', '') }}</span></template></div></div>
        <span v-if="r.keys" class="keys">{{ r.keys }}</span>
      </div>
    </div>

    <div class="loom">
      <i class="grip" />
      <span class="msg">Loom - Video Recorder: Screen, Webcam and Mic is sharing your screen.</span>
      <div class="stop">Stop sharing</div>
      <span class="hide">Hide</span>
    </div>

    <svg class="cursor" width="13" height="19" viewBox="0 0 13 19"><path d="M1 1v14l3.300-3 2.400 5.600 2.400-1L6.700 11H11z" fill="#0a0a0a" stroke="#ddd" stroke-width="1.100" /></svg>
  </div>
</template>

<style>
body { margin: 0; background: #000; overflow: hidden; }
</style>

<style scoped>
* { box-sizing: border-box; }
i, em { font-style: normal; }
svg { flex: none; display: block; }
.screen { width: 1280px; height: 800px; position: relative; overflow: hidden; background: #0d0d0a; font-family: Inter, "Noto Sans CJK SC", sans-serif; color: #e8e8e2; display: flex; flex-direction: column; font-size: 11px; white-space: nowrap; }
.sprite { position: absolute; }
.menubar { height: 23px; flex: none; display: flex; align-items: center; background: #0d0d0a; font-size: 13.500px; color: #f5f5f0; font-weight: 500; padding-bottom: 1px; }
.apple { margin-left: 21px; margin-top: -1px; }
.app { margin-left: 19px; width: 66px; font-weight: 700; letter-spacing: .2px; }
.menu { letter-spacing: -.02px; padding-left: .5px; }
.status { display: flex; align-items: center; flex: 1; margin-left: 0; }
.tile { width: 15px; height: 15px; background: #3b3b35; border-radius: 2px; display: flex; align-items: center; justify-content: center; margin-right: 6px; }
.han { width: 16px; font-size: 13px; font-family: "Noto Sans CJK SC", sans-serif; font-weight: 400; }
.clock { margin-left: 8px; }
.bt { margin-left: 18px; }
.wifi { margin-left: 14px; }
.pct { margin-left: 11px; font-size: 11.800px; width: 33px; letter-spacing: -.2px; }
.batt { margin-left: 2px; }
.sogou { margin-left: 15px; }
.time { margin-left: 20px; width: 103px; }
.siri { margin-left: 17px; }
.notif { margin-left: 12px; }

.window { height: 760px; flex: none; border-radius: 6px 6px 5px 5px; overflow: hidden; background: #464636; border-top: 1px solid #6a6a62; display: flex; flex-direction: column; }
.titlebar { height: 21px; display: flex; align-items: center; padding-left: 8px; gap: 8px; flex: none; }
.light { width: 12px; height: 12px; border-radius: 50%; background: #5f5f5c; }
.title { margin-left: 473px; display: flex; align-items: center; font-size: 12.700px; color: #b0b0a7; letter-spacing: .2px; }
.title span { margin-left: 6px; }
.title em { margin-left: 5px; color: #77776d; }
.toolbar { height: 53px; flex: none; display: flex; align-items: flex-start; padding: 7px 0 0 8px; border-bottom: 1px solid #191917; }
.tool { display: flex; flex-direction: column; align-items: center; flex: none; }
.btn { width: 100%; height: 22px; border-radius: 4px; background: #6a6a62; display: flex; align-items: center; justify-content: center; color: #f2f2ee; }
.l .btn { border-radius: 4px 0 0 4px; }
.r .btn { border-radius: 0 4px 4px 0; }
.arr { margin-left: 9px; }
.lbl, .boollabels { margin-top: 5px; font-size: 11px; line-height: 16px; color: #b8b8ae; }
.dim .lbl { color: #747464; }
.dim .btn { background: #62625b; color: #a0a094; }
.zb { width: 13px; height: 13px; border-radius: 50%; background: #85857d; line-height: 12px; text-align: center; font-size: 13px; }
.zv { width: 54px; text-align: center; font-size: 11.500px; letter-spacing: -.2px; }
.bools { margin-left: 26px; width: 215px; }
.boolrow { height: 22px; display: flex; border-radius: 4px; background: #6a6a62; color: #d8d8cf; }
.seg { flex: 1; display: flex; align-items: center; justify-content: center; border-right: 1px solid #5b5b55; }
.seg:last-child { border: 0; }
.boollabels { display: flex; gap: 9.500px; margin-left: 6px; }
.more { margin-left: 9px; margin-top: 6px; }

.body { flex: 1; display: flex; min-height: 0; }
.side { width: 293px; flex: none; display: flex; flex-direction: column; border-left: 1px solid #5b5b52; background: #2e2e28; }
.pages { height: 175px; flex: none; background: #474738; padding: 0 3px 0 2px; }
.phead { height: 32px; display: flex; align-items: center; padding: 0 8px 0 9px; font-weight: 600; color: #a9a99f; font-size: 10.500px; letter-spacing: .1px; }
.phead span { flex: 1; }
.phead svg { margin-left: 12px; }
.prow { height: 25px; line-height: 25px; padding-left: 21px; font-weight: 500; font-size: 11px; border-radius: 3px; letter-spacing: -.05px; }
.prow.active { background: #60605a; }
.layers { flex: 1; min-height: 0; overflow: hidden; }
.ghead { height: 31px; background: #474738; border-top: 1px solid #5f5f52; border-bottom: 1px solid #5f5f52; display: flex; align-items: center; font-weight: 700; font-size: 11.100px; padding-left: 8px; color: #e8e8e2; }
.ghead.closed { height: 30px; border-bottom: 0; }
.ghead.selected { background: #1579ea; border-color: #1579ea; color: #fff; }
.tri { color: #aaaaa2; }
.selected .tri, .selected .gicon { color: #fff; }
.gicon { margin: 0 6px 0 6px; color: #aaaaa2; }
.kids { padding: 3px 0 3px; }
.lrow { height: 25px; display: flex; align-items: center; padding-left: 32px; font-weight: 500; font-size: 11.200px; line-height: 16px; }
.lrow .lname { margin-top: -1px; }
.deep { padding-left: 42px; }
.sub { margin-left: -14px; margin-right: 6px; }
.licon { margin-right: 7px; }
.aa { width: 24px; padding-left: 2px; color: #9a9a90; font-weight: 400; font-size: 11px; }
.filter { height: 32px; flex: none; border-top: 1px solid #4f4f47; display: flex; align-items: center; padding: 0 0 1px 8px; color: #b5b5ab; font-size: 11.200px; }
.filter span { margin-left: 9px; }

.work { width: 665px; flex: none; display: flex; flex-direction: column; background: #030303; }
.hrow, .crow { display: flex; }
.lock { width: 27px; height: 27px; border-right: 1px solid #4a5563; border-bottom: 1px solid #44443e; display: flex; align-items: center; justify-content: center; }
.hruler text, .vruler text { fill: #dfe6ee; font-size: 10.300px; font-weight: 500; }
.canvas { width: 638px; height: 658px; background: #1a1b17; overflow: hidden; display: flex; align-items: flex-start; }
.artboard { position: relative; width: 613px; height: 345px; margin: 157px 0 0 12px; padding-top: 183px; display: flex; flex-direction: column; align-items: center; background: linear-gradient(#d5d5c8 0, #d5d5c8 203px, #fcfcfe 226px); border: 1px solid #b9b995; border-top: 0; }
.bluebtn { width: 232px; height: 22px; background: #1233a8; border-radius: 0 0 22px 22px; margin-right: 3px; flex: none; }
.yellowbtn { margin-top: 19px; margin-right: 4px; width: 233px; height: 45px; flex: none; border-radius: 23px; background: #fedb00; color: #fffbd6; display: flex; align-items: center; justify-content: center; font-size: 15px; font-weight: 300; font-family: "Noto Sans CJK SC", sans-serif; }
.h { position: absolute; width: 6px; height: 6px; background: #fff; bottom: -3px; }
.h.a { left: -4px; } .h.b { left: 303px; } .h.c { right: -4px; }

.strip { display: flex; flex-direction: column; align-items: center; flex: none; border-left: 1px solid #161614; }
.shead { height: 27px; width: 100%; display: flex; align-items: center; justify-content: center; flex: none; }
.craft { width: 41px; background: #38382c; color: #747466; padding-bottom: 1px; }
.craft .shead { background: #3e3e32; border-bottom: 1px solid #4b4b3d; }
.craft .cell { height: 41px; }
.cell { width: 100%; display: flex; align-items: center; justify-content: center; flex: none; }
.cell.line { border-bottom: 1px solid #515138; }
.cell.top { border-top: 1px solid #515138; }
.spacer { flex: 1; }
.runner { width: 42px; background: #2e2e28; color: #85857c; border-right: 1px solid #0e0e0d; }
.runner .shead { background: #1d1d19; margin-bottom: 1px; }
.runner .cell { height: 40px; }

.inspector { flex: 1; display: flex; flex-direction: column; background: #2e2e28; min-width: 0; }
.aligns { height: 27px; flex: none; background: #464636; display: flex; align-items: center; padding-left: 11px; gap: 13px; color: #77776e; border-bottom: 1px solid #4f4f47; }
.narrow { margin: 0 -6.500px 0 -7px; }
.props { padding: 11px 10px 0; flex: 1; }
.select { height: 38px; border: 1px solid #55554a; background: #414133; border-radius: 4px; display: flex; align-items: center; padding: 0 7px 0 8px; font-weight: 500; font-size: 11.200px; }
.select span { flex: 1; margin-left: 10px; }
.frow { display: flex; gap: 15px; margin-top: 9px; }
.frow.two { margin-top: 10px; }
.inp { width: 63px; height: 21px; border: 1px solid #56564a; border-radius: 4px; background: #414133; display: flex; align-items: center; justify-content: space-between; padding: 0 4px; }
.inp b { font-weight: 500; font-size: 11.200px; } .inp i { color: #8e8e84; font-size: 9.500px; }
.fit { width: 63px; height: 21px; border-radius: 4px; background: #6c6c66; text-align: center; line-height: 21px; font-size: 11.800px; font-weight: 500; }
.orient { width: 63px; height: 21px; display: flex; border: 1px solid #3f3f32; border-radius: 4px; overflow: hidden; }
.orient div { flex: 1; display: flex; align-items: center; justify-content: center; }
.orient .on { background: #1579f5; margin: -1px; }
.port { width: 7px; height: 12px; background: #b5b5ae; } .land { width: 13px; height: 8px; background: #fff; }
.check { display: flex; align-items: center; margin-top: 20px; height: 22px; font-weight: 500; font-size: 11px; }
.check i { width: 12px; height: 12px; border-radius: 3px; background: #444438; border: 1px solid #515146; margin-right: 5px; }
.check.second { margin-top: 2px; }
.swatch { margin-left: auto; width: 38px; height: 21px; border-radius: 3px; background: #a9a998; }
.export { display: flex; justify-content: space-between; align-items: center; padding-right: 3px; margin-top: 18px; height: 16px; font-weight: 600; font-size: 10.300px; color: #9b9b91; }
.anima { height: 154px; flex: none; display: flex; flex-direction: column; }
.ahead { height: 28px; flex: none; background: #464636; display: flex; align-items: center; padding-left: 7px; color: #b5b5a9; }
.ahead strong { font-weight: 600; font-size: 11.500px; margin-left: 7px; width: 72px; }
.ahead strong + svg { margin-left: 41px; }
.ahead svg:nth-of-type(n+3) { margin-left: 11px; }
.atabs { height: 26px; flex: none; display: flex; border-bottom: 1px solid #55554a; }
.atabs div { flex: 1; display: flex; align-items: center; justify-content: center; background: #34342a; border-left: 1px solid #2a2a24; }
.atabs div.on { background: #464636; border-left: 0; }
.pin { height: 50px; flex: none; display: flex; align-items: center; padding: 0 12px 0 10px; border-bottom: 1px solid #42423c; }
.pin strong { font-weight: 600; font-size: 11.200px; width: 67px; }
.pin svg + svg { margin-left: 10px; }
.pin svg + .bin { margin-left: 13px; }
.drop { margin-left: auto; width: 19px; height: 18px; border-radius: 3px; background: #74746a; display: flex; align-items: center; justify-content: center; }
.afoot { display: flex; align-items: flex-start; padding-left: 2px; padding-top: 14px; }
.fold { width: 47px; display: flex; flex-direction: column; align-items: center; color: #191916; line-height: 12px; }
.fold span { margin-top: 1px; font-size: 9px; }
.fold svg { margin-top: 1px; }
.dots { margin-left: 10px; margin-top: 8px; }
.specs { margin-left: 15px; margin-top: -1px; width: 97px; height: 20px; line-height: 20px; text-align: center; border-radius: 3px; background: #62625a; font-weight: 500; font-size: 11.200px; }

.behind { flex: none; height: 17px; width: 989px; margin-left: 24px; background: linear-gradient(#74746b, #99998b); border-top: 1px solid #8e8e82; color: #55554e; }
.behind span { display: block; width: 59px; padding-left: 17px; border-right: 1px solid #6f6f66; line-height: 17px; font-size: 11.500px; height: 16px; }

.runbar { position: absolute; left: 300px; top: 195px; width: 680px; height: 289px; border-radius: 5px; overflow: hidden; background: #464638; box-shadow: 0 6px 18px rgba(0, 0, 0, .4); }
.rtabs { height: 28px; display: flex; align-items: center; padding: 0 10px 0 18px; gap: 20px; font-size: 13.300px; color: #96968a; letter-spacing: .05px; }
.rtabs .cur { color: #f0dc7a; margin-right: -1px; }
.rtabs svg { margin-left: auto; color: #7a7a70; }
.rinput { height: 61px; background: #2a2a26; display: flex; align-items: center; padding: 0 17px 4px 22px; }
.q { font-size: 21.500px; color: #f2f2ea; letter-spacing: -.3px; }
.rinput svg { margin-left: 23px; }
.hint { margin-left: auto; font-size: 11.800px; color: #85857e; margin-top: 4px; }
.rrow { height: 50px; display: flex; align-items: center; padding: 0 17px 0 13px; border-bottom: 1px solid #5b5b45; }
.rrow:last-child { border: 0; }
.rrow.sel { background: #60605c; }
.ricon { margin-top: -1px; margin-left: -.5px; }
.rtext { margin-left: 12.500px; flex: 1; }
.rt { font-size: 13.500px; line-height: 18px; color: #f6f6f1; letter-spacing: .05px; }
.rs { display: flex; align-items: center; font-size: 11px; line-height: 16px; color: #a5a59c; }
.rs .ar { margin: 0 3px; } .rs svg { margin-right: 5px; }
.keys { font-size: 13px; font-weight: 700; color: #dcdcd3; letter-spacing: -.3px; font-family: Inter, "DejaVu Sans", sans-serif; margin-top: 2px; }

.loom { position: absolute; left: 339px; top: 749px; width: 602px; height: 42px; border-radius: 2px; background: #dedec9; display: flex; align-items: center; color: #20201c; box-shadow: 0 2px 6px rgba(0, 0, 0, .5); font-size: 11.800px; font-weight: 500; }
.grip { width: 6px; height: 11px; margin-left: 10px; border: solid #aaaaa0; border-width: 0 2px; }
.msg { margin-left: 10px; width: 423px; }
.stop { width: 106px; height: 32px; line-height: 32px; text-align: center; border-radius: 3px; background: #3e6fc8; color: #e3e8dc; font-weight: 600; }
.hide { margin-left: 10px; color: #32589c; }
.cursor { position: absolute; left: 410px; top: 382px; }
</style>
